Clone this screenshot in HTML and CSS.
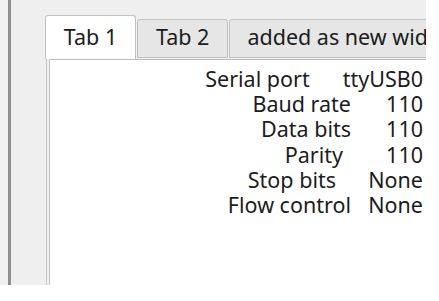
FILE: index.html
```html
<!DOCTYPE html>
<html lang="en">
<head>
  <meta charset="UTF-8">
  <title>Serial settings</title>
  <link rel="stylesheet" href="styles.css">
</head>
<body>
  <div class="window">
    <div class="window-edge"></div>
    <div class="main">
      <div class="tab-widget">
        <div class="tab-bar">
          <div class="tab active">Tab 1</div>
          <div class="tab">Tab 2</div>
          <div class="tab tab-wide">added as new widget</div>
        </div>
        <div class="pane">
          <div class="pane-inner">
            <div class="form">
              <div class="row">
                <div class="label label-serial">Serial port</div>
                <div class="value">ttyUSB0</div>
              </div>
              <div class="row">
                <div class="label">Baud rate</div>
                <div class="value">110</div>
              </div>
              <div class="row">
                <div class="label">Data bits</div>
                <div class="value">110</div>
              </div>
              <div class="row">
                <div class="label label-parity">Parity</div>
                <div class="value">110</div>
              </div>
              <div class="row">
                <div class="label label-stop">Stop bits</div>
                <div class="value">None</div>
              </div>
              <div class="row">
                <div class="label">Flow control</div>
                <div class="value">None</div>
              </div>
            </div>
          </div>
        </div>
      </div>
    </div>
  </div>
</body>
</html>
```

FILE: styles.css
```css
* {
  margin: 0;
  padding: 0;
  box-sizing: border-box;
}

body {
  background: #ffffff;
  color: #1c1c1c;
  font-family: "Noto Sans", "DejaVu Sans", sans-serif;
  font-size: 21.5px;
}

.window {
  width: 426px;
  height: 285px;
  background: #efefef;
  display: flex;
  overflow: hidden;
}

.window-edge {
  width: 11px;
  flex-shrink: 0;
  background: #f0f0f0;
  border-right: 3px solid #8e8e8e;
}

.main {
  flex: 1;
  padding: 15px 0 0 34px;
  overflow: hidden;
}

.tab-widget {
  width: 540px;
  height: 100%;
  display: flex;
  flex-direction: column;
}

.tab-bar {
  display: flex;
  align-items: flex-start;
  height: 44px;
}

.tab {
  height: 39px;
  margin-top: 4px;
  padding: 4px 18px 0;
  line-height: 25px;
  white-space: nowrap;
  background: #e6e6e6;
  border: 1px solid #c2c2c2;
  border-radius: 3px 3px 0 0;
}

.tab.active {
  width: 91px;
  height: 44px;
  margin-top: 0;
  padding: 8px 0 0;
  text-align: center;
  background: #ffffff;
  border-bottom: none;
}

.tab + .tab {
  margin-left: 1px;
}

.tab-wide {
  padding-left: 17px;
}

.pane {
  flex: 1;
  margin-left: 1px;
  padding-left: 2px;
  border-left: 1px solid #c6c6c6;
}

.pane-inner {
  height: 100%;
  background: #ffffff;
  border-top: 1px solid #bdbdbd;
  border-left: 1px solid #c4c4c4;
}

.form {
  width: 373px;
  padding-top: 6px;
  line-height: 25.2px;
}

.row {
  display: flex;
  justify-content: flex-end;
}

.label-serial {
  padding-right: 33px;
}

.label-parity {
  padding-right: 8px;
}

.label-stop {
  padding-right: 15px;
}

.value {
  min-width: 72px;
  text-align: right;
  white-space: nowrap;
}
```
